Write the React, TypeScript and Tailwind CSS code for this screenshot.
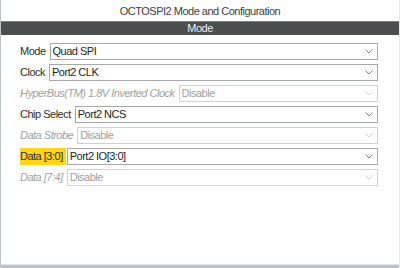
import React from "react";

type Row = {
  label: string;
  value: string;
  disabled?: boolean;
  highlight?: boolean;
};

const rows: Row[] = [
  { label: "Mode", value: "Quad SPI" },
  { label: "Clock", value: "Port2 CLK" },
  { label: "HyperBus(TM) 1.8V Inverted Clock", value: "Disable", disabled: true },
  { label: "Chip Select", value: "Port2 NCS" },
  { label: "Data Strobe", value: "Disable", disabled: true },
  { label: "Data [3:0]", value: "Port2 IO[3:0]", highlight: true },
  { label: "Data [7:4]", value: "Disable", disabled: true },
];

function Chevron({ disabled }: { disabled?: boolean }) {
  return (
    <svg width="8" height="5" viewBox="0 0 8 5" className="shrink-0">
      <polyline
        points="0.5,0.5 4,4 7.5,0.5"
        fill="none"
        stroke={disabled ? "#cfcfcf" : "#808080"}
        strokeWidth="1"
      />
    </svg>
  );
}

function SelectRow({ row }: { row: Row }) {
  return (
    <div className="flex items-stretch h-[17px]">
      <span
        className={
          "flex items-center pr-[3px] whitespace-nowrap " +
          (row.disabled ? "italic text-[#a0a0a0] " : "text-[#2e2e2e] ") +
          (row.highlight ? "bg-[#fcd51c]" : "")
        }
      >
        {row.label}
      </span>
      <div
        className={
          "ml-[1px] flex-1 flex items-center justify-between pl-[2px] pr-[4px] bg-white border " +
          (row.disabled ? "border-[#cfd2d4] text-[#a0a0a0]" : "border-[#a6a9ab] text-[#1e1e1e]")
        }
      >
        <span className="whitespace-nowrap">{row.value}</span>
        <Chevron disabled={row.disabled} />
      </div>
    </div>
  );
}

export default function App() {
  return (
    <div className="w-[400px] h-[268px] bg-white border-l border-r border-l-[#bcc6ca] border-r-[#e6e8e9] flex flex-col font-['Liberation_Sans',Arial,sans-serif] text-[11px] tracking-[-0.5px] leading-none">
      <div className="h-[21px] pt-[2px] flex items-center justify-center text-[#404040]">
        OCTOSPI2 Mode and Configuration
      </div>
      <div className="h-[14px] bg-[#4b4e4e] border-t border-[#7d8080] flex items-center justify-center text-[#eeeeee]">
        Mode
      </div>
      <div className="pt-[8px] pl-[19px] pr-[21px] flex flex-col gap-[4px]">
        {rows.map((r) => (
          <SelectRow key={r.label} row={r} />
        ))}
      </div>
      <div className="flex-1" />
      <div className="h-[4px] border-t border-[#e4e8ea] bg-[#b9c3c8]" />
    </div>
  );
}
